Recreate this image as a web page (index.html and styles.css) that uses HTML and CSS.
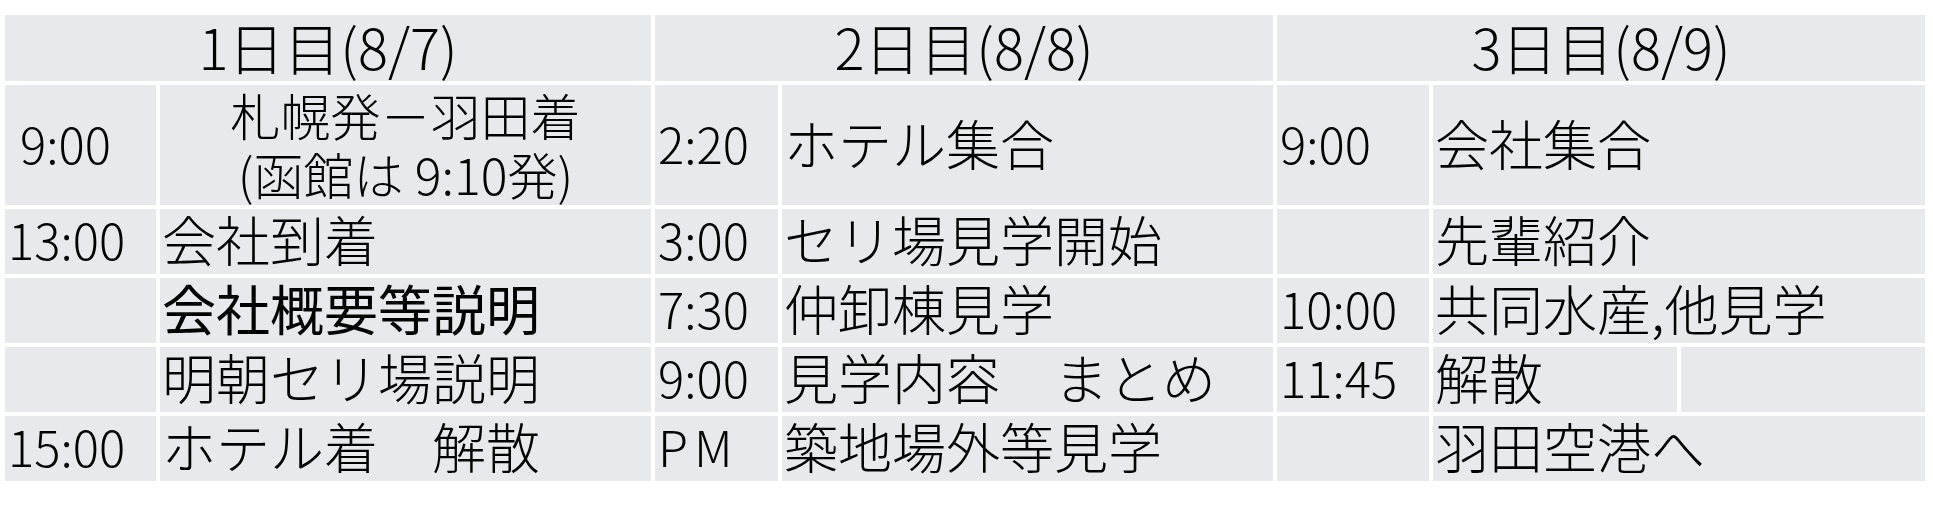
FILE: index.html
```html
<!DOCTYPE html>
<html lang="ja">
<head>
<meta charset="utf-8">
<title>日程表</title>
<link rel="stylesheet" href="styles.css">
</head>
<body>
<div class="schedule">
  <div class="cell head span2">1日目(8/7)</div>
  <div class="cell head span2">2日目(8/8)</div>
  <div class="cell head span3">3日目(8/9)</div>

  <div class="cell time indent">9:00</div>
  <div class="cell note"><span>札幌発－羽田着</span><span>(函館は 9:10発)</span></div>
  <div class="cell time">2:20</div>
  <div class="cell text">ホテル集合</div>
  <div class="cell time">9:00</div>
  <div class="cell text span2">会社集合</div>

  <div class="cell time">13:00</div>
  <div class="cell text">会社到着</div>
  <div class="cell time">3:00</div>
  <div class="cell text">セリ場見学開始</div>
  <div class="cell time"></div>
  <div class="cell text span2">先輩紹介</div>

  <div class="cell time"></div>
  <div class="cell text strong">会社概要等説明</div>
  <div class="cell time">7:30</div>
  <div class="cell text">仲卸棟見学</div>
  <div class="cell time">10:00</div>
  <div class="cell text span2">共同水産,他見学</div>

  <div class="cell time"></div>
  <div class="cell text">明朝セリ場説明</div>
  <div class="cell time">9:00</div>
  <div class="cell text">見学内容　まとめ</div>
  <div class="cell time">11:45</div>
  <div class="cell text">解散</div>
  <div class="cell text"></div>

  <div class="cell time">15:00</div>
  <div class="cell text">ホテル着　解散</div>
  <div class="cell time pm">PM</div>
  <div class="cell text">築地場外等見学</div>
  <div class="cell time"></div>
  <div class="cell text span2">羽田空港へ</div>
</div>
</body>
</html>
```

FILE: styles.css
```css
html, body {
  margin: 0;
  padding: 0;
  background: #ffffff;
}

body {
  font-family: "Noto Sans CJK JP", "Noto Sans", sans-serif;
  font-weight: 300;
  color: #000000;
}

.schedule {
  display: grid;
  grid-template-columns: 151px 491px 123px 491px 152px 244px 244px;
  grid-template-rows: 66px 120px 65px 65px 65px 65px;
  gap: 4px;
  margin: 15px 0 0 5px;
  width: 1920px;
}

.cell {
  background: #e7e9ec;
  display: flex;
  align-items: center;
  white-space: nowrap;
  padding-bottom: 5px;
  box-sizing: border-box;
}

.span2 { grid-column: span 2; }
.span3 { grid-column: span 3; }

.head {
  justify-content: center;
  font-size: 56px;
  line-height: 1.1;
}

.time {
  font-size: 49px;
  padding-left: 3px;
  line-height: 1.1;
}

.indent { padding-left: 15px; }

.pm { letter-spacing: 6px; }

.text {
  font-size: 54px;
  padding-left: 2px;
  line-height: 1.1;
}

.strong { font-weight: 400; }

.note {
  flex-direction: column;
  justify-content: center;
  font-size: 50px;
  line-height: 59px;
  padding-bottom: 2px;
}
```
